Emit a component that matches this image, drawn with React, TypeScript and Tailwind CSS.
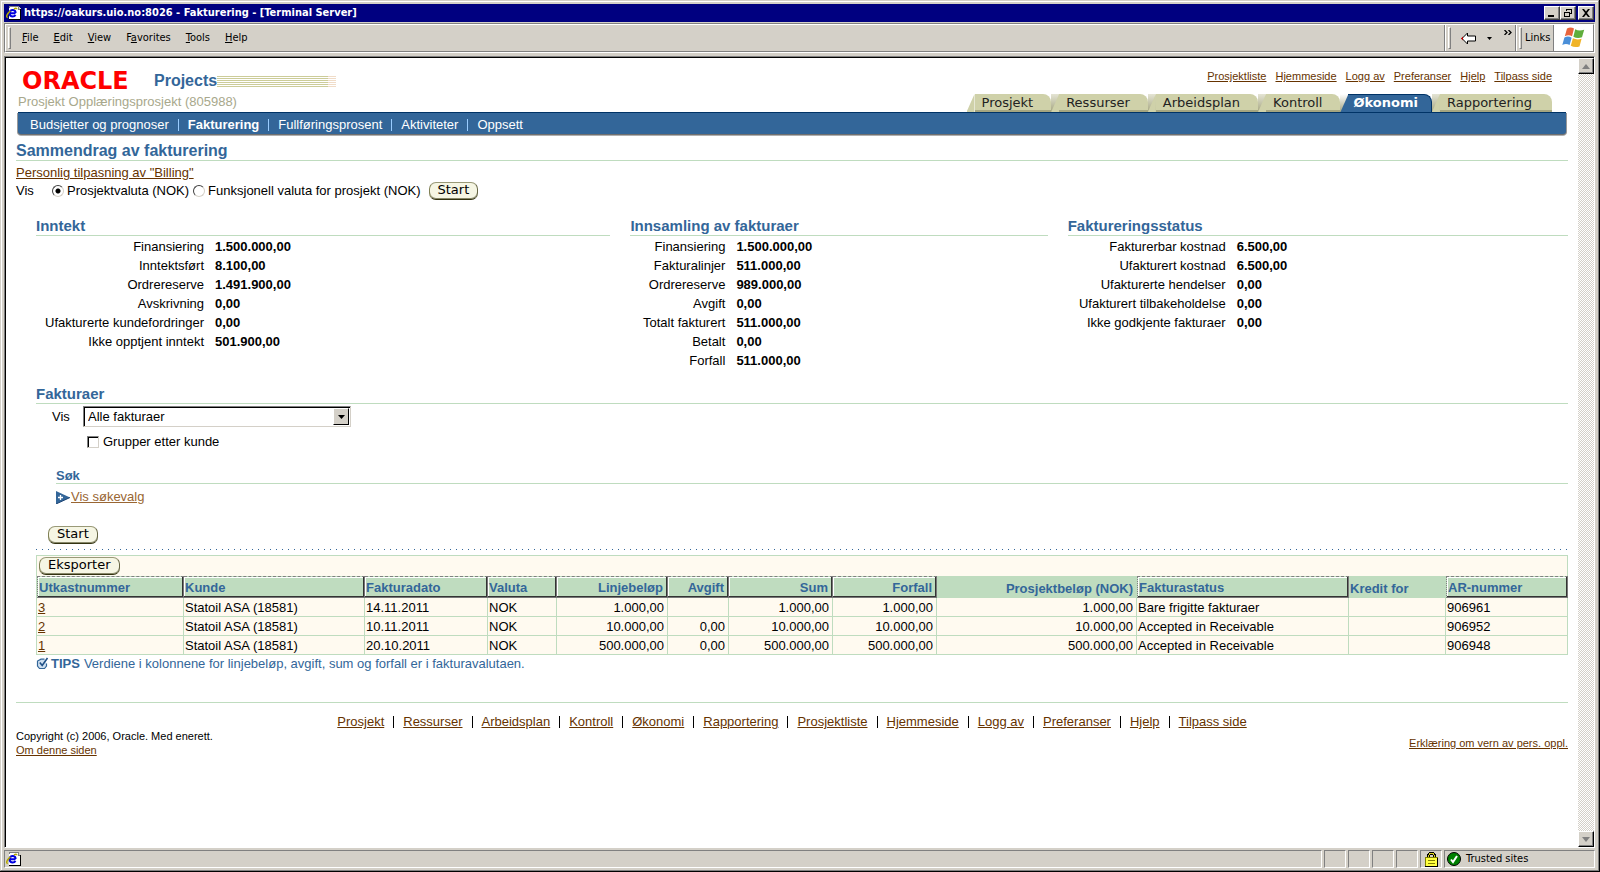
import React from 'react';

const UI = "font-['DejaVu_Sans_Condensed','DejaVu_Sans',sans-serif] text-[11px] leading-[14px]";
const LINK = 'text-[#663300] underline';

type Pair = [string, string];

const revenue: Pair[] = [
  ['Finansiering', '1.500.000,00'],
  ['Inntektsført', '8.100,00'],
  ['Ordrereserve', '1.491.900,00'],
  ['Avskrivning', '0,00'],
  ['Ufakturerte kundefordringer', '0,00'],
  ['Ikke opptjent inntekt', '501.900,00'],
];
const collection: Pair[] = [
  ['Finansiering', '1.500.000,00'],
  ['Fakturalinjer', '511.000,00'],
  ['Ordrereserve', '989.000,00'],
  ['Avgift', '0,00'],
  ['Totalt fakturert', '511.000,00'],
  ['Betalt', '0,00'],
  ['Forfall', '511.000,00'],
];
const status: Pair[] = [
  ['Fakturerbar kostnad', '6.500,00'],
  ['Ufakturert kostnad', '6.500,00'],
  ['Ufakturerte hendelser', '0,00'],
  ['Ufakturert tilbakeholdelse', '0,00'],
  ['Ikke godkjente fakturaer', '0,00'],
];

const columns = [
  { name: 'Utkastnummer', width: 'w-[147px]', right: false, sortable: true, lead: true },
  { name: 'Kunde', width: 'w-[181px]', right: false, sortable: true },
  { name: 'Fakturadato', width: 'w-[123px]', right: false, sortable: true },
  { name: 'Valuta', width: 'w-[69px]', right: false, sortable: true },
  { name: 'Linjebeløp', width: 'w-[111px]', right: true, sortable: true },
  { name: 'Avgift', width: 'w-[61px]', right: true, sortable: true },
  { name: 'Sum', width: 'w-[104px]', right: true, sortable: true },
  { name: 'Forfall', width: 'w-[104px]', right: true, sortable: true },
  { name: 'Prosjektbeløp (NOK)', width: 'w-[200px]', right: true, sortable: false },
  { name: 'Fakturastatus', width: 'w-[212px]', right: false, sortable: true, lead: true },
  { name: 'Kredit for', width: 'w-[97px]', right: false, sortable: false },
  { name: 'AR-nummer', width: 'w-[122px]', right: false, sortable: true, lead: true },
];

const invoices = [
  ['3', 'Statoil ASA (18581)', '14.11.2011', 'NOK', '1.000,00', '', '1.000,00', '1.000,00', '1.000,00', 'Bare frigitte fakturaer', '', '906961'],
  ['2', 'Statoil ASA (18581)', '10.11.2011', 'NOK', '10.000,00', '0,00', '10.000,00', '10.000,00', '10.000,00', 'Accepted in Receivable', '', '906952'],
  ['1', 'Statoil ASA (18581)', '20.10.2011', 'NOK', '500.000,00', '0,00', '500.000,00', '500.000,00', '500.000,00', 'Accepted in Receivable', '', '906948'],
];

const tabs = ['Prosjekt', 'Ressurser', 'Arbeidsplan', 'Kontroll', 'Økonomi', 'Rapportering'];
const globalLinks = ['Prosjektliste', 'Hjemmeside', 'Logg av', 'Preferanser', 'Hjelp', 'Tilpass side'];
const subnav = ['Budsjetter og prognoser', 'Fakturering', 'Fullføringsprosent', 'Aktiviteter', 'Oppsett'];
const menus: [string, string, string][] = [
  ['', 'F', 'ile'],
  ['', 'E', 'dit'],
  ['', 'V', 'iew'],
  ['F', 'a', 'vorites'],
  ['', 'T', 'ools'],
  ['', 'H', 'elp'],
];

function PageIcon() {
  return (
    <svg width="16" height="16" viewBox="0 0 16 16" aria-hidden="true" className="shrink-0" shapeRendering="crispEdges">
      <path d="M3 1h9l3 3v11H3z" fill="#fff" />
      <path d="M3 1h9M3 1v2" stroke="#808080" fill="none" />
      <path d="M12 1v3h3" stroke="#808080" fill="#d4d0c8" />
      <path d="M14.500 4v10.500H3" stroke="#000" fill="none" />
      <g shapeRendering="auto">
        <path d="M9.600 8.300H3.600c.2-2.200 1.500-3.300 3.100-3.300 1.800 0 2.900 1.200 2.900 3.100M3.500 8.500c.2 2 1.500 3 3.200 3 1.300 0 2.200-.6 2.800-1.600" fill="none" stroke="#0000e0" strokeWidth="2" />
        <path d="M1.800 12.500c-2.300 0-.9-3.700 2.600-6.800M8 4c1.500-.9 2.800-1 2.700.3" fill="none" stroke="#b5a800" strokeWidth="1.500" />
      </g>
    </svg>
  );
}

function FlagIcon() {
  return (
    <svg width="26" height="24" viewBox="0 0 26 24" aria-hidden="true">
      <path d="M6 2.500C8.500 1 11 1.200 13 2.600L11 10.200C8.800 8.900 6.500 8.900 3.800 10.200z" fill="#e8643c" />
      <path d="M14.200 3.300c2.700 1.500 5.500 1.600 9 .4l-2.200 7.600c-3 1.100-6 .9-8.600-.5z" fill="#5fae3c" />
      <path d="M3.400 11.500c2.600-1.300 5-1.200 7.200.2l-2 7.400c-2.200-1.300-4.700-1.400-7.300-.1z" fill="#4a8fd8" />
      <path d="M11.900 12.300c2.600 1.300 5.600 1.500 8.700.5l-2.100 7.600c-3 1.100-6 .9-8.700-.6z" fill="#f0b428" />
    </svg>
  );
}

function LockIcon() {
  return (
    <svg width="13" height="15" viewBox="0 0 13 15" aria-hidden="true" shapeRendering="crispEdges">
      <path d="M3.500 6V3.500L5 1.500h3l1.500 2V6" fill="none" stroke="#000" strokeWidth="3" />
      <path d="M3.500 6V3.500L5 1.500h3l1.500 2V6" fill="none" stroke="#d8d020" strokeWidth="1" />
      <rect x="0" y="5" width="13" height="10" fill="#808000" />
      <path d="M0 14.500h13M12.500 6v9" stroke="#000" />
      <rect x="1" y="6" width="11" height="8" fill="#ffff40" />
      <path d="M3 8.500h7M3 11.500h7" stroke="#808000" />
    </svg>
  );
}

function TrustedIcon() {
  return (
    <svg width="14" height="14" viewBox="0 0 14 14" aria-hidden="true">
      <circle cx="7" cy="7" r="6.500" fill="#008000" stroke="#000" />
      <path d="M4 7.500L6 10l4-6" fill="none" stroke="#fff" strokeWidth="2" />
    </svg>
  );
}

function TipIcon() {
  return (
    <svg width="13" height="13" viewBox="0 0 13 13" aria-hidden="true">
      <path d="M8.500 2.200H5L1.500 4v5L3.500 11.500h5L10.500 9V6.500" fill="#cfe0f0" stroke="#336699" strokeWidth="1.200" />
      <path d="M3.800 5.500l2.400 3L11.500 1" fill="none" stroke="#1f4f86" strokeWidth="1.600" />
    </svg>
  );
}

function BackIcon() {
  return (
    <svg width="15" height="13" viewBox="0 0 15 13" aria-hidden="true">
      <path d="M6.500 1v3h8v5h-8v3L1 6.500z" fill="#fff" stroke="#000" />
      <path d="M0 6.500L2 4.500v4z" fill="#c00000" />
    </svg>
  );
}

function WindowButton({ label, children }: { label: string; children: React.ReactNode }) {
  return (
    <button
      type="button"
      aria-label={label}
      className="flex h-[14px] w-4 items-center justify-center border border-t-white border-r-[#404040] border-b-[#404040] border-l-white bg-[#d4d0c8] shadow-[inset_-1px_-1px_0_#808080]"
    >
      <svg width="10" height="10" viewBox="0 0 10 10" aria-hidden="true" shapeRendering="crispEdges">
        {children}
      </svg>
    </button>
  );
}

function ScrollButton({ label, d }: { label: string; d: string }) {
  return (
    <button
      type="button"
      aria-label={label}
      className="flex h-4 w-4 items-center justify-center border border-t-white border-r-black border-b-black border-l-white bg-[#d4d0c8] shadow-[inset_-1px_-1px_0_#808080]"
    >
      <svg width="8" height="5" viewBox="0 0 8 5" aria-hidden="true">
        <path d={d} fill="#808080" />
      </svg>
    </button>
  );
}

function PillButton({ children }: { children: React.ReactNode }) {
  return (
    <button
      type="button"
      className="h-[18px] rounded-[7px] border border-t-[#999977] border-r-[#666644] border-b-[#333311] border-l-[#808055] bg-[#f6f6e4] px-2 pb-[2px] font-['DejaVu_Sans',sans-serif] text-[13px] leading-[14px] text-black shadow-[inset_0_-1px_0_#88886a]"
    >
      {children}
    </button>
  );
}

function Grip() {
  return <div className="h-[22px] w-[3px] border border-t-white border-r-[#808080] border-b-[#808080] border-l-white" />;
}

function Section({ title, rows, label }: { title: string; rows: Pair[]; label: string }) {
  return (
    <section>
      <h2 className="border-b border-[#bfdcbf] text-[15px] leading-[18px] font-bold text-[#336699]">{title}</h2>
      <dl className="pt-px leading-[19px]">
        {rows.map(([k, v]) => (
          <div key={k} className="flex gap-[11px]">
            <dt className={`${label} shrink-0 text-right`}>{k}</dt>
            <dd className="font-bold">{v}</dd>
          </div>
        ))}
      </dl>
    </section>
  );
}

function Tab({ name, active, first, last }: { name: string; active: boolean; first: boolean; last: boolean }) {
  return (
    <a
      href="#"
      aria-current={active ? 'page' : undefined}
      className={`flex h-[18px] font-['DejaVu_Sans',sans-serif] text-[13px] leading-[17px] ${active ? 'font-bold text-white' : 'text-[#222]'}`}
    >
      <span className={`w-2 ${active ? 'bg-[linear-gradient(#fff,#a5a580)]' : first ? '' : 'bg-[linear-gradient(#e4e4d4,#a5a580)]'}`}>
        <span
          className={`block h-full w-full [clip-path:polygon(100%_0,100%_100%,0_100%)] ${active ? 'bg-[#336699]' : 'bg-[#cfd1a9]'}`}
        />
      </span>
      <span
        className={`rounded-tr-lg ${
          active
            ? 'border-t border-r border-[#003366] bg-[#336699] pr-[13px] pl-[5px] leading-[15px]'
            : 'border-b-2 border-[#a5a580] bg-[#cfd1a9] pl-[7px]'
        } ${active ? '' : last ? 'pr-5' : 'pr-[18px]'}`}
      >
        {name}
      </span>
    </a>
  );
}

export default function App() {
  return (
    <div className="flex min-h-screen flex-col border-r border-b border-black bg-[#d4d0c8] font-['Liberation_Sans',Arial,sans-serif] text-[13px] leading-4 text-black">
      <div className="flex flex-1 flex-col border border-t-[#d4d0c8] border-r-[#808080] border-b-[#808080] border-l-[#d4d0c8]">
        <div className="flex flex-1 flex-col border-t border-l border-white py-[2px] pr-[3px] pl-[2px]">
          <header className="flex h-[18px] items-center justify-between bg-[#000080] pr-px pl-[2px]">
            <div className="flex items-center gap-[2px]">
              <PageIcon />
              <h1 className={`${UI} font-bold whitespace-nowrap text-white`}>
                https://oakurs.uio.no:8026 - Fakturering - [Terminal Server]
              </h1>
            </div>
            <div className="flex">
              <WindowButton label="Minimize">
                <path d="M1 8h6" stroke="#000" strokeWidth="2" />
              </WindowButton>
              <WindowButton label="Restore">
                <path d="M3 1h6M8.500 1v5M3.500 1v2M7 5.500h2M1 4h6M1.500 4v5M1 8.500h6M6.500 4v5" stroke="#000" fill="none" />
                <path d="M3 1h6v1H3zM1 4h6v1H1z" />
              </WindowButton>
              <div className="w-[2px]" />
              <WindowButton label="Close">
                <path d="M1 1h2l2 2.500L7 1h2L6 5l3 4H7L5 6.500 3 9H1l3-4z" shapeRendering="auto" />
              </WindowButton>
            </div>
          </header>

          <div className={`mt-px flex h-[30px] border border-t-[#808080] border-r-white border-b-white border-l-[#808080] ${UI}`}>
            <div className="flex flex-1 items-stretch border border-t-white border-r-[#808080] border-b-[#808080] border-l-white">
              <nav className="flex flex-1 items-center border-r border-[#808080] pl-[2px]">
                <Grip />
                <div className="flex gap-[15px] pl-[11px]">
                  {menus.map(([a, b, c]) => (
                    <button type="button" key={b}>
                      {a}
                      <span className="underline">{b}</span>
                      {c}
                    </button>
                  ))}
                </div>
              </nav>
              <div className="flex w-[71px] items-center border-r border-l border-r-[#808080] border-l-white pl-[2px]">
                <Grip />
                <button type="button" aria-label="Back" className="ml-[10px]">
                  <BackIcon />
                </button>
                <svg width="5" height="3" viewBox="0 0 5 3" aria-hidden="true" className="ml-[11px]">
                  <path d="M0 0h5L2.500 3z" />
                </svg>
                <svg width="8" height="5" viewBox="0 0 8 5" aria-hidden="true" className="mb-3 ml-3">
                  <path d="M.5 0l2.500 2.500L.5 5M4.500 0L7 2.500 4.500 5" fill="none" stroke="#000" strokeWidth="1.300" />
                </svg>
              </div>
              <div className="flex w-[38px] items-center gap-[3px] border-r border-l border-r-[#808080] border-l-white pl-[2px]">
                <Grip />
                <span>Links</span>
              </div>
              <div className="flex w-[39px] items-center justify-center bg-white">
                <FlagIcon />
              </div>
            </div>
          </div>

          <div className="mt-[3px] flex flex-1 border border-t-[#808080] border-r-white border-b-white border-l-[#808080]">
            <div className="flex flex-1 border-t border-l border-black bg-white">
              <main className="flex-1 px-[10px]">
                <div className="flex items-end justify-between">
                  <div className="pt-[11px] pb-[2px]">
                    <div className="flex h-6 items-center pl-[6px]">
                      <div className="w-[125px] font-['DejaVu_Sans',sans-serif] text-[24px] leading-6 font-bold text-[#ff0000]">
                        ORACLE
                      </div>
                      <div className="pl-[7px] text-[16px] leading-5 font-bold text-[#336699]">Projects</div>
                      <div className="h-[11px] w-[111px] bg-[repeating-linear-gradient(#cccc99_0_1px,#fff_1px_2px)]" />
                      <div className="h-[11px] w-2 bg-[repeating-linear-gradient(#f0dcc8_0_1px,#fff_1px_2px)]" />
                    </div>
                    <div className="mt-px pl-[2px] text-[#a8a88c]">Prosjekt Opplæringsprosjekt (805988)</div>
                  </div>
                  <div className="flex flex-col items-end pr-4">
                    <nav className="flex gap-[9px] text-[11px] leading-[14px]">
                      {globalLinks.map((l) => (
                        <a href="#" key={l} className={LINK}>
                          {l}
                        </a>
                      ))}
                    </nav>
                    <nav className="mt-[11px] flex">
                      {tabs.map((t, i) => (
                        <Tab key={t} name={t} active={t === 'Økonomi'} first={i === 0} last={i === tabs.length - 1} />
                      ))}
                    </nav>
                  </div>
                </div>

                <nav className="mx-[2px] flex h-[22px] items-center gap-[9px] rounded-br-[3px] rounded-bl-[3px] border-t border-[#003366] bg-[#336699] pt-[2px] pl-3 text-white shadow-[0_1px_0_#707070,0_2px_0_#b0b0b0,-1px_1px_0_#999,1px_1px_0_#999]">
                  {subnav.map((s, i) => (
                    <React.Fragment key={s}>
                      {i > 0 && <div className="h-3 w-px bg-[#99ccff]" />}
                      <a href="#" className={s === 'Fakturering' ? 'font-bold' : ''}>
                        {s}
                      </a>
                    </React.Fragment>
                  ))}
                </nav>

                <h1 className="mt-[6px] border-b border-[#bfdcbf] pt-[2px] text-[16px] leading-[18px] font-bold text-[#336699]">
                  Sammendrag av fakturering
                </h1>
                <div className="mt-1">
                  <a href="#" className={LINK}>
                    Personlig tilpasning av "Billing"
                  </a>
                </div>
                <div className="flex h-[19px] items-center">
                  <span className="w-9">Vis</span>
                  <label className="flex items-center gap-[3px]">
                    <input
                      type="radio"
                      name="currency"
                      defaultChecked
                      className="h-3 w-3 appearance-none rounded-full border border-t-[#404040] border-r-[#d4d0c8] border-b-[#d4d0c8] border-l-[#404040] bg-white checked:bg-[radial-gradient(circle,#000_0_2px,#fff_3px)]"
                    />
                    Prosjektvaluta (NOK)
                  </label>
                  <label className="ml-1 flex items-center gap-[3px]">
                    <input
                      type="radio"
                      name="currency"
                      className="h-3 w-3 appearance-none rounded-full border border-t-[#404040] border-r-[#d4d0c8] border-b-[#d4d0c8] border-l-[#404040] bg-white checked:bg-[radial-gradient(circle,#000_0_2px,#fff_3px)]"
                    />
                    Funksjonell valuta for prosjekt (NOK)
                  </label>
                  <div className="ml-2 flex">
                    <PillButton>Start</PillButton>
                  </div>
                </div>

                <div className="pl-5">
                  <div className="mt-[17px] grid grid-cols-[574fr_417fr_500fr] gap-x-5">
                    <Section title="Inntekt" rows={revenue} label="w-[168px]" />
                    <Section title="Innsamling av fakturaer" rows={collection} label="w-[95px]" />
                    <Section title="Faktureringsstatus" rows={status} label="w-[158px]" />
                  </div>

                  <h2 className="mt-[15px] border-b border-[#bfdcbf] text-[15px] leading-[18px] font-bold text-[#336699]">
                    Fakturaer
                  </h2>
                  <div className="mt-[2px] flex items-center pl-4">
                    <label htmlFor="invoice-view" className="w-[31px] pt-px">
                      Vis
                    </label>
                    <div className="relative">
                      <select
                        id="invoice-view"
                        className="block h-[21px] w-[268px] appearance-none border border-t-[#808080] border-r-[#d4d0c8] border-b-[#d4d0c8] border-l-[#808080] bg-white pt-px pl-1 leading-4 shadow-[inset_1px_1px_0_#000]"
                      >
                        <option>Alle fakturaer</option>
                      </select>
                      <span className="pointer-events-none absolute top-[2px] right-[2px] flex h-[17px] w-4 items-center justify-center border border-t-white border-r-black border-b-black border-l-white bg-[#d4d0c8]">
                        <svg width="7" height="4" viewBox="0 0 7 4" aria-hidden="true">
                          <path d="M0 0h7L3.500 4z" />
                        </svg>
                      </span>
                    </div>
                  </div>
                  <label className="mt-[5px] flex h-[19px] w-fit items-center gap-1 pl-[51px]">
                    <input
                      type="checkbox"
                      className="h-3 w-3 appearance-none border border-t-[#808080] border-r-[#d4d0c8] border-b-[#d4d0c8] border-l-[#808080] bg-white shadow-[inset_1px_1px_0_#000] checked:bg-black"
                    />
                    <span className="pt-px">Grupper etter kunde</span>
                  </label>

                  <div className="mt-4 pl-5">
                    <h3 className="border-b border-[#bfdcbf] pt-[2px] leading-[14px] font-bold text-[#336699]">Søk</h3>
                    <a href="#" className="mt-[5px] flex w-fit items-center gap-px text-[#996633] underline">
                      <svg width="14" height="13" viewBox="0 0 14 13" aria-hidden="true">
                        <path d="M0 0l14 6.500L0 13z" fill="#336699" />
                        <path d="M0 13l14-6.500" stroke="#1b4373" fill="none" />
                        <path d="M2 6.500h5M4.500 4v5" stroke="#fff" strokeWidth="1.300" />
                      </svg>
                      Vis søkevalg
                    </a>
                  </div>

                  <div className="mt-[21px] flex pl-3">
                    <PillButton>Start</PillButton>
                  </div>
                  <div className="mt-[5px] h-px bg-[linear-gradient(90deg,#336699_1px,transparent_1px)] bg-[length:6px_1px]" />

                  <div className="mt-[5px] border-l border-[#bfdcbf]">
                    <div className="flex h-[21px] border-t border-r border-[#bfdcbf] bg-[#fffaf0] pt-px pl-[2px]">
                      <PillButton>Eksporter</PillButton>
                    </div>
                    <table className="w-full table-fixed border-separate border-spacing-0 bg-[#fffaf0]">
                      <thead>
                        <tr className="h-[22px]">
                          {columns.map((c) => (
                            <th
                              key={c.name}
                              scope="col"
                              className={`${c.width} bg-[#bfdcbf] p-0 leading-[18px] font-bold whitespace-nowrap text-[#336699] ${
                                c.right ? 'pr-1 text-right' : 'pl-px text-left'
                              } ${
                                c.sortable
                                  ? 'border-t border-r border-b border-t-[#808080] border-r-[#777] border-b-[#777] pt-[2px] [border-top-style:dashed] shadow-[inset_-1px_-1px_0_#333,inset_1px_1px_0_#fff]'
                                  : 'pt-[3px]'
                              } ${c.lead ? 'border-l border-l-[#808080] [border-left-style:dotted]' : ''}`}
                            >
                              {c.name}
                            </th>
                          ))}
                        </tr>
                      </thead>
                      <tbody>
                        {invoices.map((row) => (
                          <tr key={row[0]} className="h-[19px]">
                            {row.map((cell, i) => (
                              <td
                                key={columns[i].name}
                                className={`border-r border-b border-[#bfdcbf] p-0 pt-[2px] leading-4 whitespace-nowrap ${
                                  columns[i].right ? 'pr-[3px] text-right' : 'pl-px'
                                }`}
                              >
                                {i === 0 ? (
                                  <a href="#" className={LINK}>
                                    {cell}
                                  </a>
                                ) : (
                                  cell
                                )}
                              </td>
                            ))}
                          </tr>
                        ))}
                      </tbody>
                    </table>
                  </div>
                  <p className="flex h-[17px] items-center text-[#336699]">
                    <TipIcon />
                    <strong className="pr-1 pl-[2px]">TIPS</strong>
                    Verdiene i kolonnene for linjebeløp, avgift, sum og forfall er i fakturavalutaen.
                  </p>
                </div>

                <footer className="mt-[30px] border-t border-[#bfdcbf] pt-[11px]">
                  <nav className="flex h-[15px] justify-center gap-[9px]">
                    {[...tabs, ...globalLinks].map((l, i) => (
                      <React.Fragment key={l}>
                        {i > 0 && <div className="mt-[2px] h-3 w-px bg-black" />}
                        <a href="#" className={LINK}>
                          {l}
                        </a>
                      </React.Fragment>
                    ))}
                  </nav>
                  <div className="flex justify-between text-[11px] leading-[14px]">
                    <div>
                      <p>Copyright (c) 2006, Oracle. Med enerett.</p>
                      <a href="#" className={LINK}>
                        Om denne siden
                      </a>
                    </div>
                    <a href="#" className={`mt-[7px] ${LINK}`}>
                      Erklæring om vern av pers. oppl.
                    </a>
                  </div>
                </footer>
              </main>
              <div className="flex w-4 flex-col justify-between bg-[repeating-conic-gradient(#d4d0c8_0_25%,#fff_0_50%)] bg-[length:2px_2px]">
                <ScrollButton label="Scroll up" d="M4 0l4 5H0z" />
                <ScrollButton label="Scroll down" d="M0 0h8L4 5z" />
              </div>
            </div>
          </div>

          <div className={`mt-[2px] flex h-[18px] gap-[2px] ${UI}`}>
            <div className="flex flex-1 items-center border border-t-[#808080] border-r-white border-b-white border-l-[#808080] pl-px">
              <PageIcon />
            </div>
            {[0, 1, 2, 3].map((n) => (
              <div key={n} className="w-[22px] border border-t-[#808080] border-r-white border-b-white border-l-[#808080]" />
            ))}
            <div className="flex w-[22px] items-center justify-center border border-t-[#808080] border-r-white border-b-white border-l-[#808080]">
              <LockIcon />
            </div>
            <div className="flex w-[151px] items-center gap-[5px] border border-t-[#808080] border-r-white border-b-white border-l-[#808080] pl-[2px]">
              <TrustedIcon />
              Trusted sites
            </div>
          </div>
        </div>
      </div>
    </div>
  );
}
